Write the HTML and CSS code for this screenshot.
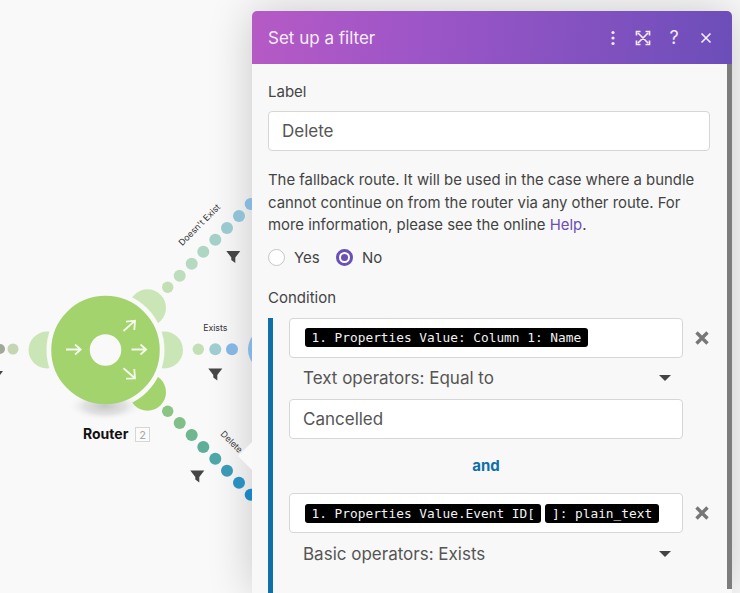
FILE: index.html
```html
<!DOCTYPE html>
<html lang="en">
<head>
  <meta charset="UTF-8">
  <title>Set up a filter</title>
  <link rel="stylesheet" href="styles.css">
</head>
<body>

  <div class="dialog">
    <header class="dialog-head">
      <h1>Set up a filter</h1>
      <div class="head-icons">
        <svg width="4" height="16" viewBox="0 0 4 16"><circle cx="2" cy="2.5" r="1.6"/><circle cx="2" cy="8" r="1.6"/><circle cx="2" cy="13.5" r="1.6"/></svg>
        <svg class="ico-stroke" width="16" height="16" viewBox="0 0 16 16"><path d="M3 3l10 10M13 3L3 13M1.5 5.5v-4h4M10.5 1.5h4v4M14.5 10.5v4h-4M5.5 14.5h-4v-4"/></svg>
        <span class="help">?</span>
        <svg class="ico-stroke" width="12" height="12" viewBox="0 0 12 12"><path d="M1.5 1.5l9 9M10.5 1.5l-9 9"/></svg>
      </div>
    </header>

    <div class="dialog-body">
      <div class="scroll-thumb"></div>

      <label class="field-label">Label</label>
      <div class="input input-wide">Delete</div>

      <p class="hint">The fallback route. It will be used in the case where a bundle cannot continue on from the router via any other route. For more information, please see the online <a href="#">Help</a>.</p>

      <div class="radios">
        <span class="radio"></span><span class="radio-text">Yes</span>
        <span class="radio radio-on"></span><span class="radio-text">No</span>
      </div>

      <label class="field-label cond-label">Condition</label>
      <div class="condition">
        <div class="cond-row">
          <div class="input chips"><span class="chip">1. Properties Value: Column 1: Name</span></div>
          <svg class="remove" width="14" height="14" viewBox="0 0 14 14"><path d="M1.5 1.5l11 11M12.5 1.5l-11 11"/></svg>
        </div>
        <div class="select">Text operators: Equal to<span class="caret"></span></div>
        <div class="input input-value">Cancelled</div>
        <div class="and">and</div>
        <div class="cond-row">
          <div class="input chips"><span class="chip">1. Properties Value.Event ID[</span><span class="chip">]: plain_text</span></div>
          <svg class="remove" width="14" height="14" viewBox="0 0 14 14"><path d="M1.5 1.5l11 11M12.5 1.5l-11 11"/></svg>
        </div>
        <div class="select">Basic operators: Exists<span class="caret"></span></div>
      </div>
    </div>
  </div>

  <svg class="canvas" width="252" height="593" viewBox="0 0 252 593">
    <defs>
      <radialGradient id="floor">
        <stop offset="0" stop-color="#c6c6c6"/>
        <stop offset=".55" stop-color="#dcdcdc" stop-opacity=".8"/>
        <stop offset="1" stop-color="#f9f9f9" stop-opacity="0"/>
      </radialGradient>
      <mask id="gap">
        <rect width="252" height="593" fill="#fff"/>
        <circle cx="105.5" cy="350" r="59" fill="#000"/>
      </mask>
      <path id="funnel" d="M-7-6H7L2 0.5V6L-2 3V0.5Z"/>
    </defs>

    <ellipse cx="105" cy="406" rx="38" ry="15" fill="url(#floor)"/>

    <circle cx="0" cy="349" r="5" fill="#a0aa98"/>
    <circle cx="13" cy="349" r="5.5" fill="#c5d6b3"/>

    <g fill="#cbe6b6" mask="url(#gap)">
      <circle cx="47" cy="350" r="18.5"/>
      <circle cx="164.5" cy="350" r="18.5"/>
      <circle cx="147.5" cy="307.8" r="18.5"/>
    </g>
    <circle cx="147.5" cy="392.2" r="18.5" fill="#a3d36d" mask="url(#gap)"/>

    <circle cx="105.5" cy="350" r="35" fill="none" stroke="#a3d36d" stroke-width="38.5"/>
    <g class="arrows">
      <path d="M66 349.5h14.5M75 344.500l5.700 5-5.700 5"/>
      <path d="M131.500 349.500h14.500M140.500 344.500l5.700 5-5.700 5"/>
      <path d="M123.500 331l11.500-10.300M126 321.700l9-1 -.7 9.300"/>
      <path d="M123.500 368.300l11.500 10M126 378.700l9-.400-.7-9.300"/>
    </g>

    <g>
      <circle cx="167.700" cy="287.300" r="5.700" fill="#c3e0b4"/>
      <circle cx="179.700" cy="275.700" r="6" fill="#bedebb"/>
      <circle cx="191.700" cy="263.700" r="6" fill="#b6dabf"/>
      <circle cx="203.300" cy="251.700" r="6" fill="#add6c3"/>
      <circle cx="215.300" cy="239.700" r="6" fill="#a4d0c8"/>
      <circle cx="227" cy="228" r="6" fill="#9ac8cf"/>
      <circle cx="239" cy="216" r="6" fill="#8fc0d5"/>
      <circle cx="250.700" cy="204" r="6" fill="#85b8dc"/>

      <circle cx="198.300" cy="349.300" r="5.700" fill="#c3e0b4"/>
      <circle cx="215.300" cy="349.300" r="6" fill="#9fccd0"/>
      <circle cx="232" cy="349.300" r="6" fill="#82b5e2"/>
      <circle cx="270" cy="349.300" r="22" fill="#82b5e2"/>

      <circle cx="167.700" cy="411.300" r="5.700" fill="#8ac583"/>
      <circle cx="179.700" cy="423" r="6" fill="#80c088"/>
      <circle cx="191.700" cy="435" r="6" fill="#6fb78f"/>
      <circle cx="203.300" cy="447" r="6" fill="#5eae9a"/>
      <circle cx="215.300" cy="458.700" r="6" fill="#4da6a8"/>
      <circle cx="227" cy="470.700" r="6" fill="#3a9ab5"/>
      <circle cx="239" cy="482.700" r="6" fill="#288fc0"/>
      <circle cx="250.700" cy="494.700" r="6" fill="#1b85c4"/>
    </g>

    <g fill="#454545">
      <use href="#funnel" x="-4" y="377"/>
      <use href="#funnel" x="233.300" y="257"/>
      <use href="#funnel" x="215.300" y="374.500"/>
      <use href="#funnel" x="197.300" y="476.500"/>
    </g>

    <path d="M238 456L252 442V470Z" fill="#f9f9f9"/>

    <text class="route-text" transform="translate(201.500 227) rotate(-45)">Doesn't Exist</text>
    <text class="route-text" x="215.300" y="331">Exists</text>
    <text class="route-text" transform="translate(229.500 444) rotate(45)">Delete</text>

    <text class="node-name" x="83" y="439">Router</text>
    <rect x="135.500" y="427.500" width="14" height="14" fill="#fbfbfb" stroke="#d6d6d6"/>
    <text class="node-num" x="142.500" y="439">2</text>
  </svg>

</body>
</html>
```

FILE: styles.css
```css
* {
  margin: 0;
  padding: 0;
  box-sizing: border-box;
}

html, body {
  height: 100%;
  overflow: hidden;
}

body {
  background: #f9f9f9;
  font-family: Inter, sans-serif;
  color: #444;
}

.canvas {
  position: absolute;
  top: 0;
  left: 0;
  z-index: 2;
}

.arrows path {
  fill: none;
  stroke: #f4fbee;
  stroke-width: 1.8;
}

.route-text {
  font-size: 8.8px;
  fill: #333;
  text-anchor: middle;
}

.node-name {
  font-size: 14px;
  font-weight: 700;
  fill: #111;
}

.node-num {
  font-size: 11px;
  fill: #a8a8a8;
  text-anchor: middle;
}

.dialog {
  position: absolute;
  top: 11px;
  left: 252px;
  width: 479.5px;
  height: 582px;
  background: #f8f8f8;
  border-radius: 5px 5px 0 0;
  box-shadow: 0 0 45px rgba(0, 0, 0, .2);
}

.dialog-head {
  height: 53px;
  padding: 0 20px 0 16px;
  display: flex;
  align-items: center;
  justify-content: space-between;
  background: linear-gradient(95deg, #b65ac5 0%, #9d55c7 35%, #7f51bf 75%, #6c4eb9 100%);
  border-radius: 5px 5px 0 0;
  color: #fff;
}

.dialog-head h1 {
  font-size: 17px;
  font-weight: 400;
  color: #f5ecfa;
}

.head-icons {
  display: flex;
  align-items: center;
  gap: 19.5px;
}

.head-icons svg {
  fill: #f3e9f8;
}

.head-icons .ico-stroke {
  fill: none;
  stroke: #f3e9f8;
  stroke-width: 1.7;
}

.help {
  font-size: 18px;
  width: 12px;
  margin-left: -2px;
  text-align: center;
  color: #f3e9f8;
}

.dialog-body {
  position: relative;
  height: 529px;
  padding: 19px 0 0 16px;
}

.scroll-thumb {
  position: absolute;
  top: 0;
  right: 0;
  width: 4.5px;
  height: 525px;
  background: #7d7d7d;
}

.field-label {
  display: block;
  font-size: 15px;
  line-height: 18px;
}

.input {
  background: #fff;
  border: 1px solid #d6d6d6;
  border-radius: 4px;
  height: 40px;
  font-size: 17px;
  line-height: 38px;
  color: #555;
}

.input-wide {
  width: 442px;
  margin-top: 10px;
  padding-left: 13px;
  line-height: 39px;
}

.hint {
  width: 440px;
  margin-top: 18px;
  font-size: 14.9px;
  line-height: 22.5px;
}

.hint a {
  color: #6b4fb5;
  text-decoration: none;
}

.radios {
  margin-top: 10.5px;
  height: 20px;
  display: flex;
  align-items: center;
  font-size: 15px;
}

.radio {
  width: 17px;
  height: 17px;
  margin-right: 9px;
  background: #fff;
  border: 1px solid #c6c6c6;
  border-radius: 50%;
}

.radio-text {
  width: 42px;
}

.radio-on {
  border: 3px solid #6a4fb6;
  position: relative;
}

.radio-on::after {
  content: "";
  position: absolute;
  top: 2px;
  left: 2px;
  width: 7px;
  height: 7px;
  background: #6a4fb6;
  border-radius: 50%;
}

.cond-label {
  margin-top: 21.5px;
}

.condition {
  margin-top: 11px;
  height: 275px;
  padding-left: 16px;
  border-left: 5px solid #0e6fa9;
}

.cond-row {
  display: flex;
  align-items: center;
}

.chips {
  width: 394px;
  flex: none;
  display: flex;
  align-items: center;
  gap: 4px;
  padding-left: 15px;
}

.chip {
  background: #000;
  color: #f2f2f2;
  border-radius: 3px;
  height: 19px;
  padding: 0 6.5px;
  font-family: "DejaVu Sans Mono", monospace;
  font-size: 12.8px;
  line-height: 19px;
}

.remove {
  margin-left: 11.5px;
  fill: none;
  stroke: #777;
  stroke-width: 3.4;
}

.select {
  width: 394px;
  height: 41.5px;
  padding: 0 12px 0 14px;
  display: flex;
  align-items: center;
  justify-content: space-between;
  font-size: 17px;
  color: #555;
}

.caret {
  width: 0;
  height: 0;
  border-left: 6px solid transparent;
  border-right: 6px solid transparent;
  border-top: 6px solid #444;
}

.input-value {
  width: 394px;
  padding-left: 13px;
}

.and {
  width: 394px;
  height: 54px;
  line-height: 54px;
  text-align: center;
  font-size: 15px;
  font-weight: 700;
  color: #0e6fa9;
}
```
